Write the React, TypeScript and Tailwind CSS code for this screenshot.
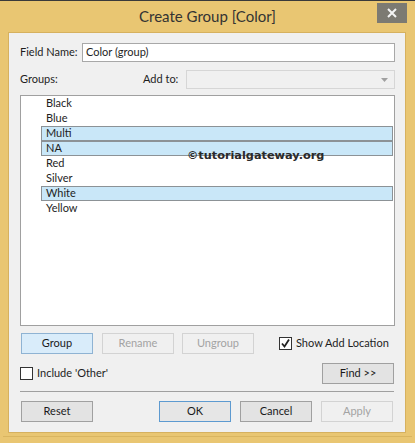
import React from 'react';

const items = ['Black', 'Blue', 'Multi', 'NA', 'Red', 'Silver', 'White', 'Yellow'];
const selected = ['Multi', 'NA', 'White'];

const Btn = ({
  label,
  className = '',
  kind = 'normal',
}: {
  label: string;
  className?: string;
  kind?: 'normal' | 'focus' | 'default' | 'disabled';
}) => {
  const look =
    kind === 'focus'
      ? 'bg-[#d9ecfa] border-[#8fb3d3] text-[#1a1a1a]'
      : kind === 'default'
        ? 'bg-[#e6e6e6] border-[#5d9ad0] text-[#1a1a1a]'
        : kind === 'disabled'
          ? 'bg-[#f0f0f0] border-[#d3d3d3] text-[#a3a3a3]'
          : 'bg-[#e3e3e3] border-[#a0a0a0] text-[#1a1a1a]';
  return (
    <div
      className={`shrink-0 whitespace-nowrap flex items-center justify-center border h-[21px] w-[72px] ${look} ${className}`}
    >
      {label}
    </div>
  );
};

const CheckBox = ({ checked }: { checked: boolean }) => (
  <div className="shrink-0 w-[13px] h-[13px] border border-[#333] bg-white flex items-center justify-center">
    {checked && (
      <svg width="11" height="11" viewBox="0 0 11 11">
        <path d="M2 5.5 L4.5 8.5 L9 1.5" fill="none" stroke="#222" strokeWidth="1.8" />
      </svg>
    )}
  </div>
);

export default function App() {
  return (
    <div
      className="w-[415px] h-[443px] bg-[#e9c672] flex flex-col text-[11px] text-[#1e1e1e] whitespace-nowrap"
      style={{ fontFamily: 'Lato, "Noto Sans", sans-serif' }}
    >
      {/* title bar */}
      <div className="relative h-[32px] shrink-0 border-t border-[#3a3a3a] flex items-center justify-center">
        <span className="text-[15px] text-[#333] pb-[1px]">Create Group [Color]</span>
        <div className="absolute right-[8px] top-[2px] w-[30px] h-[20px] bg-[#7c7a72] flex items-center justify-center">
          <svg width="10" height="10" viewBox="0 0 10 10">
            <path d="M1 1 L9 9 M9 1 L1 9" stroke="#f4f4f4" strokeWidth="2" />
          </svg>
        </div>
      </div>

      {/* client area */}
      <div className="shrink-0 ml-[8px] mr-[9px] h-[401px] bg-[#f0f0f0] border border-[#d6b15f] pl-[11px] pr-[10px] flex flex-col">
        <div className="mt-[10px] flex items-center h-[19px]">
          <span className="shrink-0 w-[62px]">Field Name:</span>
          <div className="shrink-0 w-[313px] h-[19px] bg-white border border-[#a8a8a8] flex items-center pl-[3px]">
            Color (group)
          </div>
        </div>

        <div className="mt-[8px] flex items-center h-[19px]">
          <span className="shrink-0 w-[123px]">Groups:</span>
          <span className="shrink-0 w-[43px]">Add to:</span>
          <div className="shrink-0 w-[209px] h-[19px] bg-[#f0f0f0] border border-[#d6d6d6] flex items-center justify-end pr-[6px]">
            <svg width="7" height="4" viewBox="0 0 7 4">
              <path d="M0 0 L7 0 L3.5 4 Z" fill="#a0a0a0" />
            </svg>
          </div>
        </div>

        <div className="relative shrink-0 mt-[6px] w-[375px] h-[231px] bg-white border border-[#a0a0a0]">
          {items.map((it) => (
            <div
              key={it}
              className={`h-[15px] ml-[20px] mr-[1px] flex items-center pl-[5px] ${
                selected.includes(it) ? 'bg-[#c9e7f8] border border-[#8c9296]' : ''
              }`}
            >
              <span className={selected.includes(it) ? 'ml-[-1px]' : ''}>{it}</span>
            </div>
          ))}
          <span
            className="absolute left-[166px] top-[52px] text-[11.3px] font-bold text-[#2a2a2a]"
            style={{ fontFamily: '"DejaVu Sans", Verdana, sans-serif' }}
          >
            ©tutorialgateway.org
          </span>
        </div>

        <div className="mt-[7px] flex items-center h-[21px]">
          <Btn label="Group" kind="focus" className="ml-[1px]" />
          <Btn label="Rename" kind="disabled" className="ml-[9px]" />
          <Btn label="Ungroup" kind="disabled" className="ml-[8px]" />
          <div className="shrink-0 ml-[25px] flex items-center gap-[4px]">
            <CheckBox checked />
            <span>Show Add Location</span>
          </div>
        </div>

        <div className="mt-[9px] flex items-center justify-between h-[20px]">
          <div className="flex items-center gap-[4px]">
            <CheckBox checked={false} />
            <span>Include 'Other'</span>
          </div>
          <Btn label="Find >>" className="h-[20px] mr-[1px]" />
        </div>

        <div className="shrink-0 mt-[8px] h-[1px] bg-[#a0a0a0] w-[374px]" />

        <div className="mt-[9px] flex items-center h-[21px]">
          <Btn label="Reset" className="ml-[1px]" />
          <Btn label="OK" kind="default" className="ml-[66px]" />
          <Btn label="Cancel" className="ml-[9px]" />
          <Btn label="Apply" kind="disabled" className="ml-[9px]" />
        </div>
      </div>
      <div className="shrink-0 mt-[3px] mx-[3px] h-[1px] bg-[#d9b560]" />
    </div>
  );
}
